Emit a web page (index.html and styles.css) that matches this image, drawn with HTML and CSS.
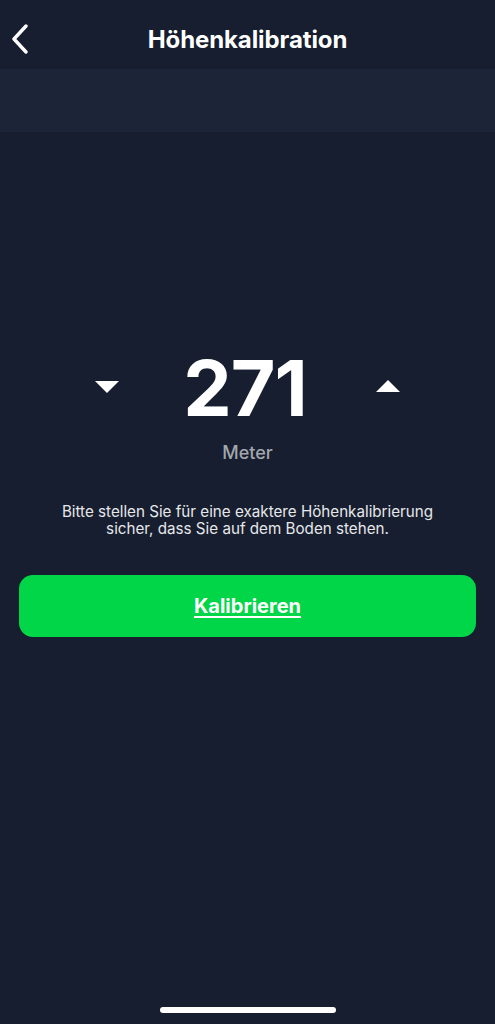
FILE: index.html
```html
<!DOCTYPE html>
<html lang="de">
<head>
<meta charset="utf-8">
<link rel="stylesheet" href="styles.css">
</head>
<body>
<div class="screen">
  <header class="nav">
    <span class="back">
      <svg width="20" height="30" viewBox="0 0 20 30"><path d="M16 2 L4 15 L16 28" fill="none" stroke="#fff" stroke-width="3.4" stroke-linecap="round" stroke-linejoin="round"/></svg>
    </span>
    <h1 class="title">Höhenkalibration</h1>
  </header>
  <div class="band"></div>
  <main class="content">
    <div class="value-row">
      <span class="arrow down"></span>
      <span class="value">271</span>
      <span class="arrow up"></span>
    </div>
    <div class="unit">Meter</div>
    <p class="hint">Bitte stellen Sie für eine exaktere Höhenkalibrierung<br>sicher, dass Sie auf dem Boden stehen.</p>
    <button class="cta">Kalibrieren</button>
  </main>
  <div class="home"></div>
</div>
</body>
</html>
```
FILE: styles.css
```css
* { box-sizing: border-box; margin: 0; padding: 0; }
html, body { width: 495px; height: 1024px; overflow: hidden; }
body { background: #161e2f; font-family: Inter, "Noto Sans", sans-serif; color: #fff; }
.screen { position: relative; height: 1024px; display: flex; flex-direction: column; }
.nav { height: 69px; background: #161e2f; display: flex; justify-content: center; position: relative; padding-top: 25px; }
.back { position: absolute; left: 10px; top: 24px; }
.title { font-size: 24px; line-height: 30px; font-weight: 700; letter-spacing: -0.1px; }
.band { height: 63px; background: #1b2537; }
.content { display: flex; flex-direction: column; align-items: center; padding-top: 220px; }
.value-row { display: flex; align-items: center; justify-content: space-between; width: 306px; height: 70px; }
.value { font-size: 77px; font-weight: 700; letter-spacing: -1px; line-height: 1; margin-top: 3px; margin-right: 5px; }
.arrow { width: 0; height: 0; border-left: 12px solid transparent; border-right: 12px solid transparent; }
.arrow.down { border-top: 12px solid #fff; margin-top: 0px; }
.arrow.up { border-bottom: 12px solid #fff; margin-top: -2px; }
.unit { margin-top: 20px; font-size: 18px; line-height: 22px; color: #a3a6ad; font-weight: 500; }
.hint { margin-top: 39px; text-align: center; font-size: 15.2px; line-height: 17px; color: #e6e7ea; }
.cta { margin-top: 38px; width: 457px; height: 62px; border: none; border-radius: 14px; background: #00d647; color: #fff; font-family: inherit; font-size: 20px; font-weight: 700; text-decoration: underline; text-underline-offset: 3px; text-decoration-thickness: 2px; }
.home { position: absolute; left: 160px; top: 1007px; width: 176px; height: 6px; border-radius: 3px; background: #fff; }
```
